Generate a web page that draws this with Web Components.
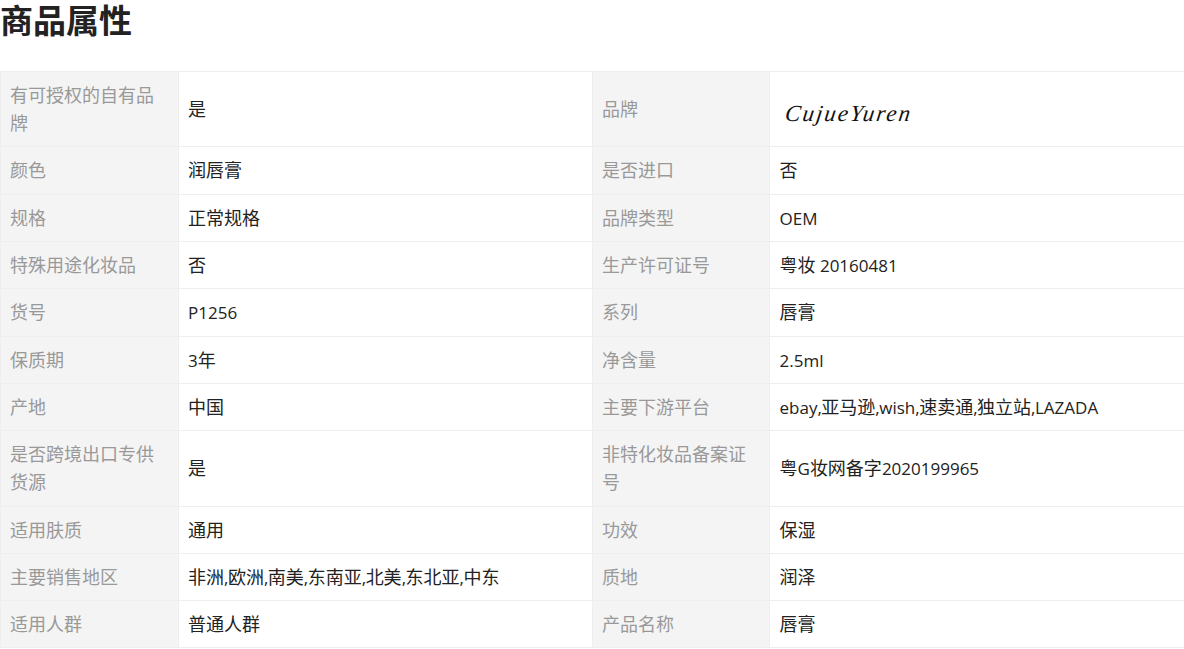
<!DOCTYPE html>
<html lang="zh">
<head>
<meta charset="utf-8">
<title>商品属性</title>
<style>
  html, body { margin: 0; background: #fff; overflow: hidden; }
  body { font-family: "Open Sans", "Noto Sans CJK SC", sans-serif; font-size: 18px; color: #222; }
</style>
</head>
<body>
<attr-section heading="商品属性">
  <attr-row label="有可授权的自有品牌" value="是" label2="品牌"><span slot="value2" class="brand">CujueYuren</span></attr-row>
  <attr-row label="颜色" value="润唇膏" label2="是否进口" value2="否"></attr-row>
  <attr-row label="规格" value="正常规格" label2="品牌类型" value2="OEM"></attr-row>
  <attr-row label="特殊用途化妆品" value="否" label2="生产许可证号" value2="粤妆 20160481"></attr-row>
  <attr-row label="货号" value="P1256" label2="系列" value2="唇膏"></attr-row>
  <attr-row label="保质期" value="3年" label2="净含量" value2="2.5ml"></attr-row>
  <attr-row label="产地" value="中国" label2="主要下游平台" value2="ebay,亚马逊,wish,速卖通,独立站,LAZADA"></attr-row>
  <attr-row label="是否跨境出口专供货源" value="是" label2="非特化妆品备案证号" value2="粤G妆网备字2020199965"></attr-row>
  <attr-row label="适用肤质" value="通用" label2="功效" value2="保湿"></attr-row>
  <attr-row label="主要销售地区" value="非洲,欧洲,南美,东南亚,北美,东北亚,中东" label2="质地" value2="润泽"></attr-row>
  <attr-row label="适用人群" value="普通人群" label2="产品名称" value2="唇膏"></attr-row>
</attr-section>

<script>
const sectionTemplate = document.createElement("template");
sectionTemplate.innerHTML = `
  <style>
    :host { display: block; }
    h2 {
      margin: 0;
      height: 71px;
      font-size: 33px;
      line-height: 42px;
      font-weight: 700;
      color: #222;
    }
    .rows { display: block; border-top: 1px solid #eee; }
  </style>
  <h2></h2>
  <section class="rows"><slot></slot></section>
`;
class AttrSection extends HTMLElement {
  connectedCallback() {
    const shadowRoot = this.attachShadow({ mode: "open" });
    shadowRoot.appendChild(sectionTemplate.content.cloneNode(true));
    shadowRoot.querySelector("h2").textContent = this.getAttribute("heading");
  }
}

const rowTemplate = document.createElement("template");
rowTemplate.innerHTML = `
  <style>
    :host {
      display: grid;
      grid-template-columns: 179px 414px 177px 1fr;
      margin-top: -1px;
      border-top: 1px solid #eee;
      border-bottom: 1px solid #eee;
    }
    .cell {
      display: flex;
      align-items: center;
      box-sizing: border-box;
      padding: 9.17px 9px;
      line-height: 28px;
    }
    .text { display: block; }
    .latin { font-size: 17px; line-height: 1; }
    .comma { letter-spacing: -0.5px; }
    .name {
      background: #f4f4f4;
      color: #999;
      border-right: 1px solid #eee;
      border-left: 1px solid #eee;
      padding-right: 12px;
    }
    .first { border-right: 1px solid #eee; }
    .name.second { border-left: 0; }
    .last { padding-left: 9.5px; }
    ::slotted(.brand) {
      font-family: "Liberation Serif", serif;
      font-style: italic;
      font-size: 23px;
      letter-spacing: 2px;
      color: #111;
      padding: 10px 0 0 6px;
      transform: skewX(-8deg);
      display: inline-block;
    }
  </style>
  <div class="cell name"></div>
  <div class="cell val first"></div>
  <div class="cell name second"></div>
  <div class="cell val last"><slot name="value2"></slot></div>
`;
class AttrRow extends HTMLElement {
  connectedCallback() {
    const shadowRoot = this.attachShadow({ mode: "open" });
    shadowRoot.appendChild(rowTemplate.content.cloneNode(true));
    const cells = shadowRoot.querySelectorAll(".cell");
    this.fill(cells[0], this.getAttribute("label"));
    this.fill(cells[1], this.getAttribute("value"));
    this.fill(cells[2], this.getAttribute("label2"));
    if (this.hasAttribute("value2")) {
      this.fill(cells[3], this.getAttribute("value2"));
    }
  }
  // latin runs sit a size below the chinese ones, commas a bit tighter
  fill(cell, text) {
    const wrap = document.createElement("span");
    wrap.className = "text";
    text.split(/(,|[\u0000-\u002b\u002d-\u02ff]+)/).forEach((run) => {
      if (!run) return;
      if (/^[\u0000-\u02ff]/.test(run)) {
        const latin = document.createElement("span");
        latin.className = run === "," ? "latin comma" : "latin";
        latin.textContent = run;
        wrap.appendChild(latin);
      } else {
        wrap.appendChild(document.createTextNode(run));
      }
    });
    cell.appendChild(wrap);
  }
}

if (!customElements.get("attr-row")) customElements.define("attr-row", AttrRow);
if (!customElements.get("attr-section")) customElements.define("attr-section", AttrSection);
</script>
</body>
</html>
